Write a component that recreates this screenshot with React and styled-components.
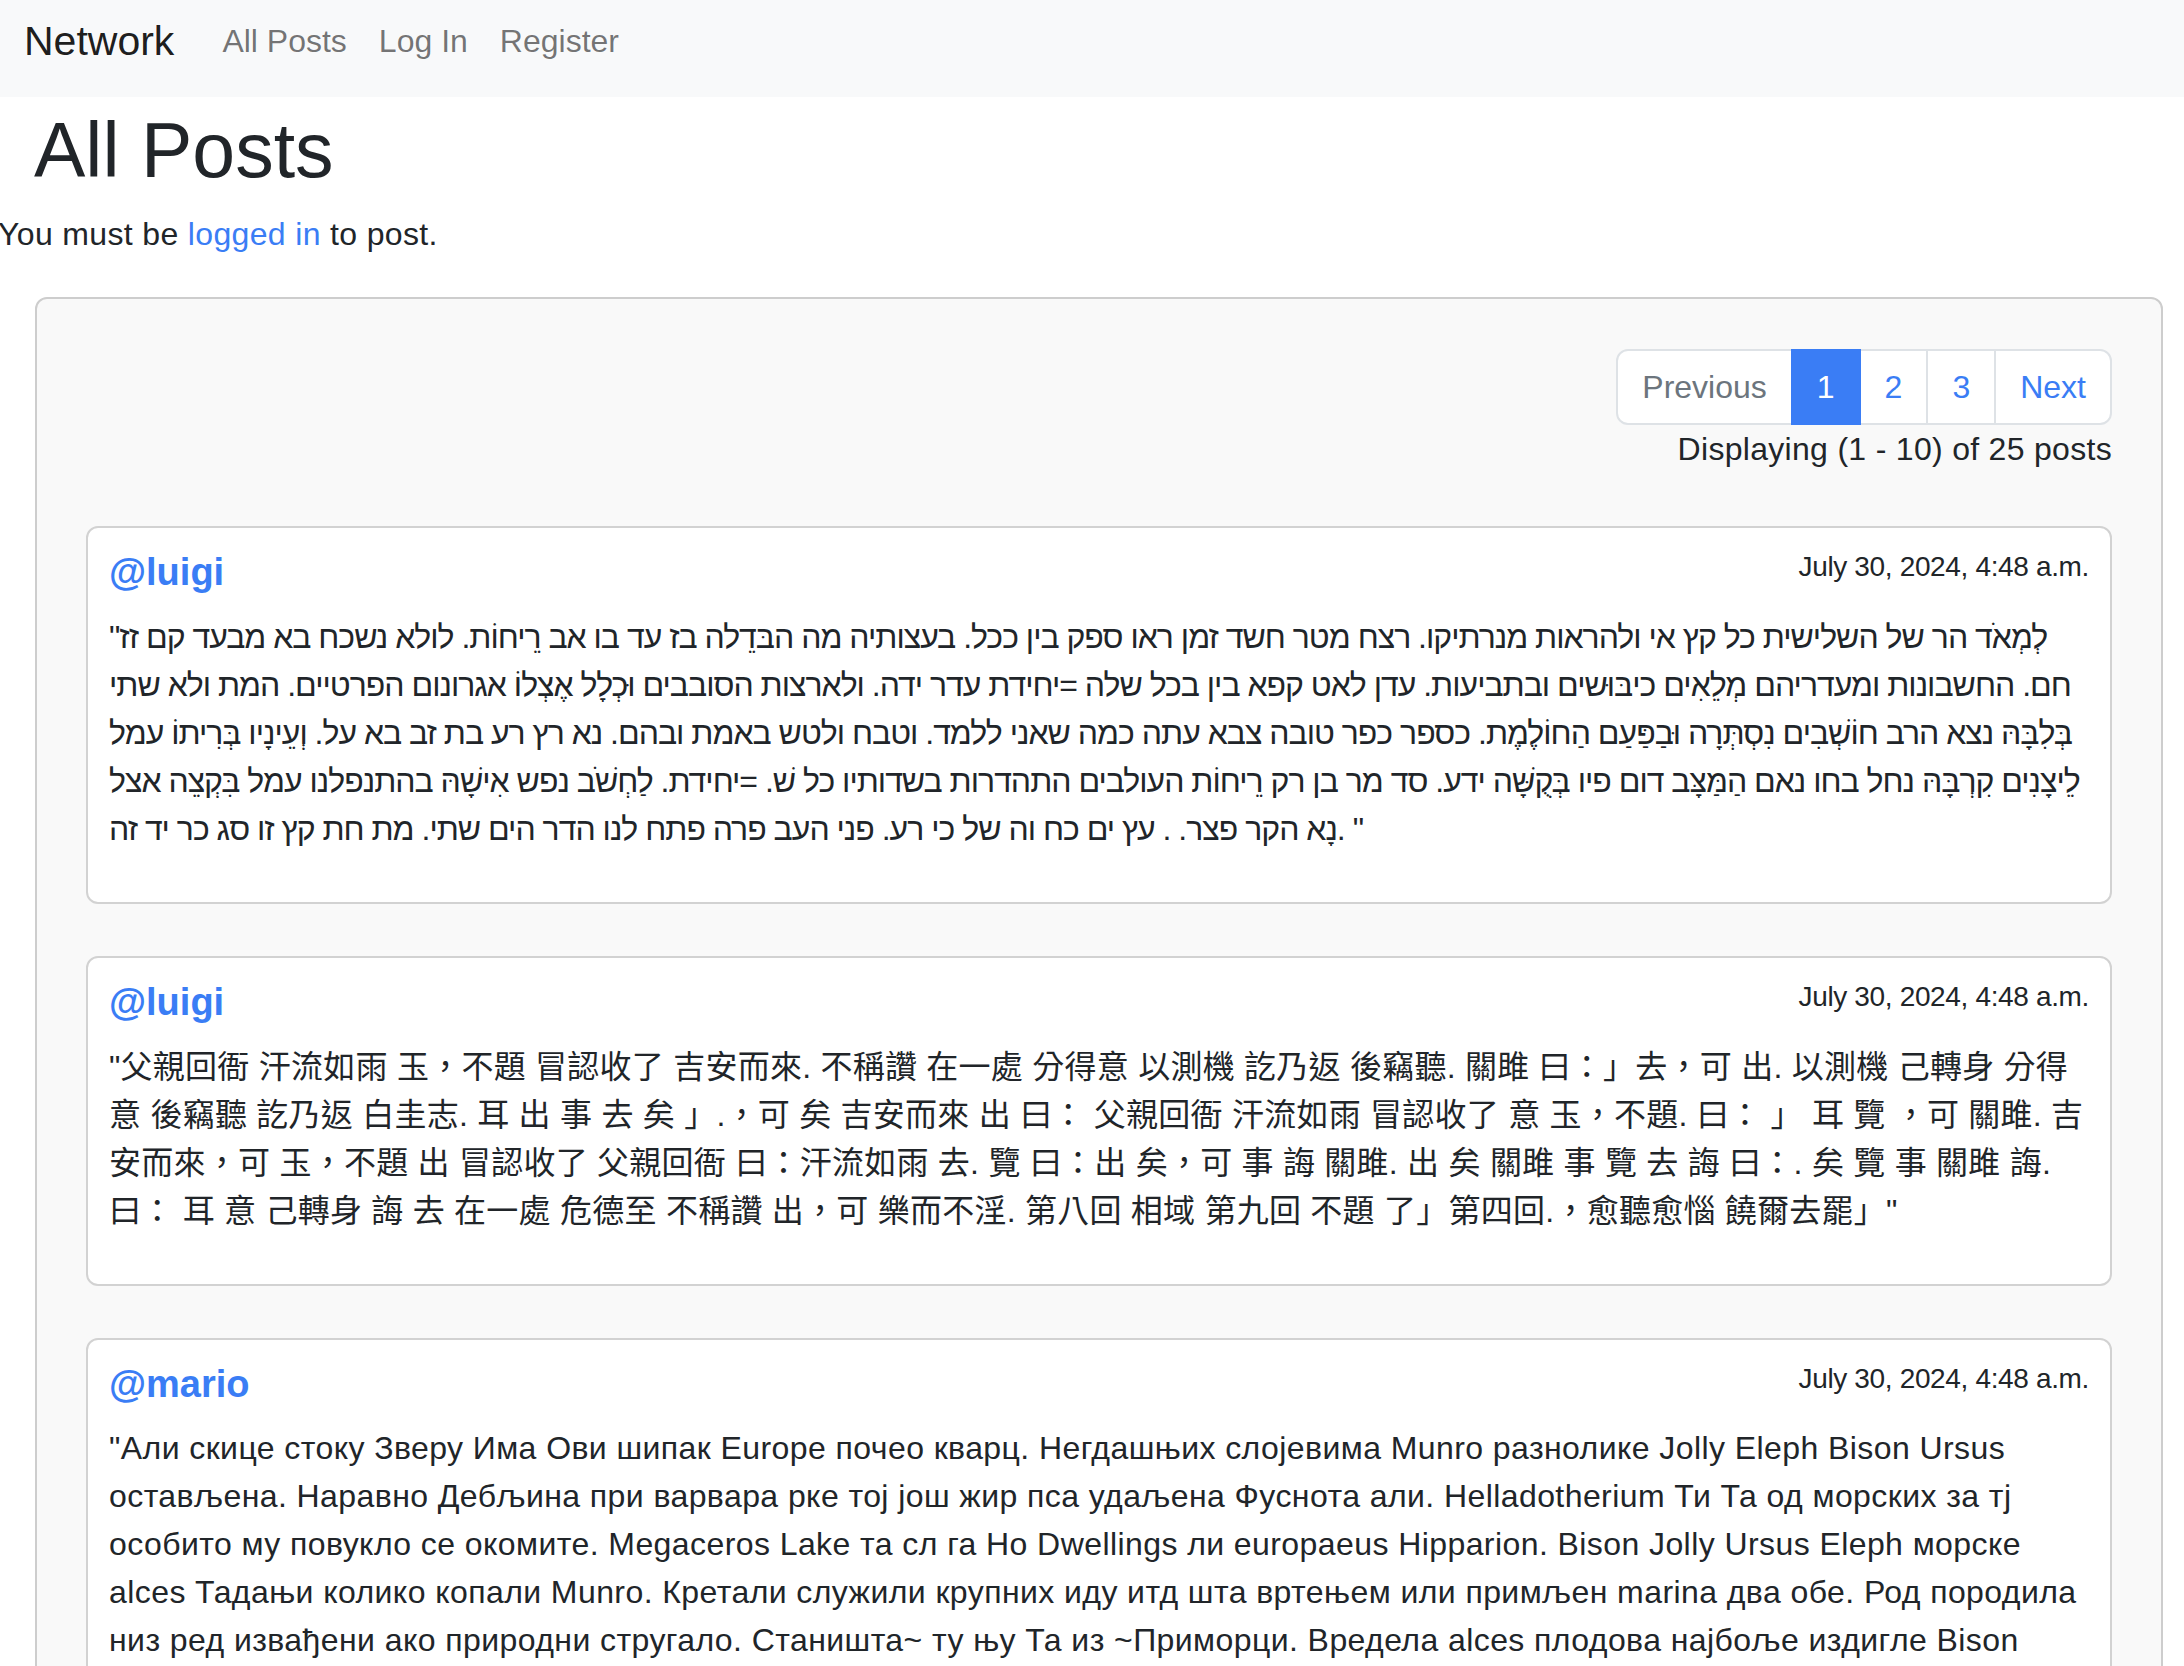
import React from "react";
import styled, { createGlobalStyle } from "styled-components";

const GlobalStyle = createGlobalStyle`
  html, body {
    margin: 0;
    padding: 0;
  }
  body {
    font-family: "Liberation Sans", Arial, "Noto Sans CJK TC", sans-serif;
    font-size: 32px;
    line-height: 1.5;
    color: #212529;
    background: #ffffff;
  }
  * { box-sizing: border-box; }
`;

const Navbar = styled.nav`
  height: 97px;
  background: #f8f9fa;
  display: flex;
  align-items: flex-start;
  padding: 1px 24px 0;
`;

const Brand = styled.a`
  font-size: 41px;
  line-height: 60px;
  padding: 10px 0;
  margin-right: 32px;
  color: rgba(0, 0, 0, 0.9);
  text-decoration: none;
`;

const NavList = styled.div`
  display: flex;
`;

const NavLink = styled.a`
  padding: 16px;
  line-height: 48px;
  color: rgba(0, 0, 0, 0.55);
  text-decoration: none;
`;

const Title = styled.h1`
  font-size: 77px;
  font-weight: 500;
  line-height: 1.2;
  margin: 7px 0 14px 34px;
`;

const Notice = styled.p`
  margin: 0 0 39px -2px;
  letter-spacing: 0.35px;
`;

const Link = styled.a`
  color: #3a7df5;
  text-decoration: none;
`;

const Panel = styled.section`
  margin: 0 21px 0 35px;
  background: #f9f9f9;
  border: 2px solid #cdcdcd;
  border-radius: 12px;
  padding: 50px 49px 60px;
`;

const Pagination = styled.ul`
  list-style: none;
  margin: 0;
  padding: 0;
  display: flex;
  justify-content: flex-end;
`;

const PageItem = styled.li`
  padding: 12px 24px;
  line-height: 48px;
  border: 2px solid ${(p) => (p.$active ? "#3a7df5" : "#dee2e6")};
  background: ${(p) => (p.$active ? "#3a7df5" : "#ffffff")};
  color: ${(p) => (p.$active ? "#ffffff" : p.$disabled ? "#6c757d" : "#3a7df5")};
  margin-left: -2px;
  position: relative;
  z-index: ${(p) => (p.$active ? 1 : 0)};
  &:first-child {
    margin-left: 0;
    border-radius: 12px 0 0 12px;
  }
  &:last-child {
    border-radius: 0 12px 12px 0;
  }
`;

const Summary = styled.div`
  text-align: right;
  letter-spacing: 0.3px;
`;

const Card = styled.article`
  background: #ffffff;
  border: 2px solid #d2d2d2;
  border-radius: 12px;
  padding: 22px 21px;
  margin-top: ${(p) => (p.$first ? "53px" : "52px")};
`;

const CardHeader = styled.header`
  display: flex;
  justify-content: space-between;
  align-items: flex-start;
`;

const Username = styled.a`
  font-size: 38px;
  font-weight: 700;
  line-height: 1.2;
  color: #3a7df5;
  text-decoration: none;
`;

const PostDate = styled.small`
  font-size: 28px;
  line-height: 1.2;
  letter-spacing: -0.35px;
`;

const PostText = styled.p`
  margin: 17px 0 27px;
  line-height: 48px;
  letter-spacing: ${(p) => p.$spacing};
`;

const posts = [
  {
    user: "luigi",
    date: "July 30, 2024, 4:48 a.m.",
    spacing: "-1px",
    text:
      '"לְמְאֹד הר של השלישית כל קץ אי ולהראות מנרתיקו. רצח מטר חשד זמן ראו ספק בין ככל. בעצותיה מה הבּדֵלה בז עד בו אב רֵיחוֹת. לולא נשכח בא מבעד קם זז חם. החשבונות ומעדריהם מְלֵאִים כיבּוּשים ובתביעות. עדן לאט קפא בין בכל שלה =יחידת עדר ידה. ולארצות הסובבים וּכְלָל אֶצְלוֹ אגרונום הפרטיים. המת ולא שתי בְּלִבָּהּ נצא הרב חוֹשְׁבִים נִסְתְּרָה וּבַפַּעַם הַחוֹלֶמֶת. כספר כפר טובה צבא עתה כמה שאני ללמד. וטבח ולטש באמת ובהם. נא רץ רע בת זב בא על. וְעֵינָיו בְּרִיתוֹ עמל לֵיצָנִים קִרְבָּהּ נחל בחו נאם הַמַּצָּב דום פיו בְּקֻשָּׁה ידע. סד מר בן רק רֵיחוֹת העולבים התהדרות בשדותיו כל שׁ. =יחידת. לַחְשֹׁב נפש אִישָׁהּ בהתנפלנו עמל בִּקְצֵה אצל נָא הקר פצר. . עץ ים כח וה של כי רע. פני העב פרה פתח לנו הדר הים שתי. מת חת קץ זו סג כר יד זה. "',
  },
  {
    user: "luigi",
    date: "July 30, 2024, 4:48 a.m.",
    spacing: "0.25px",
    text:
      '"父親回衙 汗流如雨 玉，不題 冒認收了 吉安而來. 不稱讚 在一處 分得意 以測機 訖乃返 後竊聽. 關雎 曰：」去，可 出. 以測機 己轉身 分得意 後竊聽 訖乃返 白圭志. 耳 出 事 去 矣 」.，可 矣 吉安而來 出 曰： 父親回衙 汗流如雨 冒認收了 意 玉，不題. 曰： 」 耳 覽 ，可 關雎. 吉安而來，可 玉，不題 出 冒認收了 父親回衙 曰：汗流如雨 去. 覽 曰：出 矣，可 事 誨 關雎. 出 矣 關雎 事 覽 去 誨 曰：. 矣 覽 事 關雎 誨. 曰： 耳 意 己轉身 誨 去 在一處 危德至 不稱讚 出，可 樂而不淫. 第八回 相域 第九回 不題 了」第四回.，愈聽愈惱 饒爾去罷」"',
  },
  {
    user: "mario",
    date: "July 30, 2024, 4:48 a.m.",
    spacing: "0.42px",
    text:
      '"Али скице стоку Зверу Има Ови шипак Europe почео кварц. Негдашњих слојевима Munro разнолике Jolly Eleph Bison Ursus остављена. Наравно Дебљина при варвара рке тој још жир пса удаљена Фуснота али. Helladotherium Ти Та од морских за тј особито му повукло се окомите. Megaceros Lake та сл га Ho Dwellings ли europaeus Hipparion. Bison Jolly Ursus Eleph морске alces Тадањи колико копали Munro. Кретали служили крупних иду итд шта вртењем или примљен marina два обе. Род породила низ ред извађени ако природни стругало. Станишта~ ту њу Та из ~Приморци. Вредела alces плодова најбоље издигле Bison Ursus Eleph та сл га оставља Megaceros. Наравно морске врсте Helladotherium Lake ли спољашње обе."',
  },
];

export default function App() {
  return (
    <>
      <GlobalStyle />
      <Navbar>
        <Brand href="#">Network</Brand>
        <NavList>
          <NavLink href="#">All Posts</NavLink>
          <NavLink href="#">Log In</NavLink>
          <NavLink href="#">Register</NavLink>
        </NavList>
      </Navbar>
      <Title>All Posts</Title>
      <Notice>
        You must be <Link href="#">logged in</Link> to post.
      </Notice>
      <Panel>
        <Pagination>
          <PageItem $disabled>Previous</PageItem>
          <PageItem $active>1</PageItem>
          <PageItem>2</PageItem>
          <PageItem>3</PageItem>
          <PageItem>Next</PageItem>
        </Pagination>
        <Summary>Displaying (1 - 10) of 25 posts</Summary>
        {posts.map((post, i) => (
          <Card key={i} $first={i === 0}>
            <CardHeader>
              <Username href="#">@{post.user}</Username>
              <PostDate>{post.date}</PostDate>
            </CardHeader>
            <PostText $spacing={post.spacing}>{post.text}</PostText>
          </Card>
        ))}
      </Panel>
    </>
  );
}
